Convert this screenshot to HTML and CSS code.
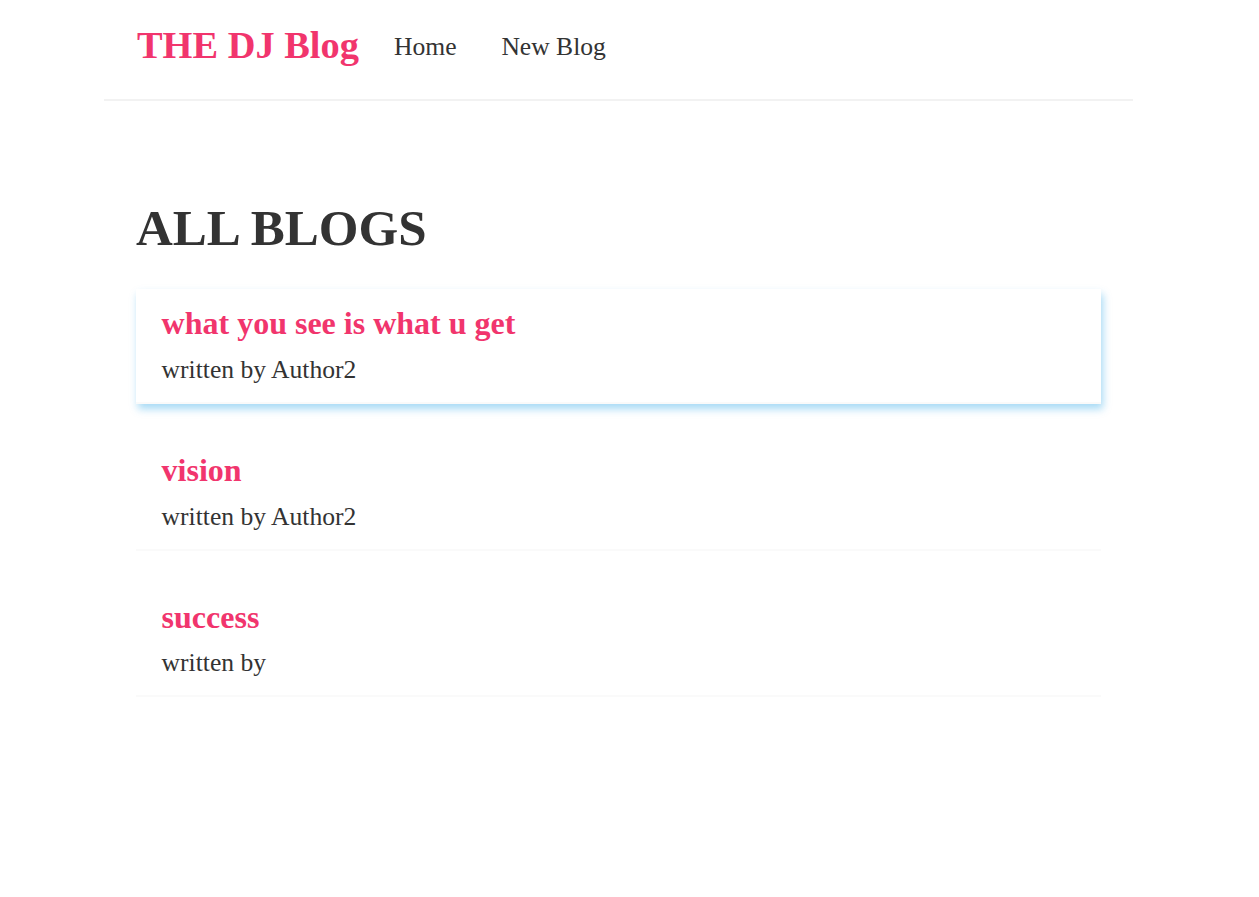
FILE: index.html
```html
<!DOCTYPE html>
<html lang="en">
<head>
<meta charset="utf-8">
<title>THE DJ Blog</title>
<link rel="stylesheet" href="styles.css">
</head>
<body>
<div class="app">
  <nav class="navbar">
    <h1 class="brand">THE DJ Blog</h1>
    <div class="links">
      <a href="#" class="link">Home</a>
      <a href="#" class="link">New Blog</a>
    </div>
  </nav>
  <main class="content">
    <h2 class="page-title">ALL BLOGS</h2>
    <div class="blog-preview hovered">
      <h2 class="blog-title">what you see is what u get</h2>
      <p class="blog-author">written by Author2</p>
    </div>
    <div class="blog-preview">
      <h2 class="blog-title">vision</h2>
      <p class="blog-author">written by Author2</p>
    </div>
    <div class="blog-preview">
      <h2 class="blog-title">success</h2>
      <p class="blog-author">written by </p>
    </div>
  </main>
</div>
</body>
</html>
```
FILE: styles.css
```css
* {
  margin: 0;
  box-sizing: border-box;
}
body {
  font-family: "Liberation Serif", "Times New Roman", serif;
  color: #333;
  background: #fff;
}
.app {
  padding-right: 22px;
}
.navbar {
  display: flex;
  align-items: center;
  max-width: 1029px;
  margin: 0 auto;
  padding: 23px 33px 32px;
  border-bottom: 2px solid #f2f2f2;
}
.brand {
  color: #f1356d;
  font-size: 38.4px;
  font-weight: bold;
}
.links {
  display: flex;
  padding-top: 3px;
}
.link {
  margin-left: 25.6px;
  padding: 0 9.6px;
  text-decoration: none;
  color: #333;
  font-size: 25.6px;
}
.content {
  max-width: 1029px;
  margin: 64px auto;
  padding: 34px 32px 32px 32px;
}
.page-title {
  font-size: 51px;
  font-weight: bold;
  line-height: 59px;
  margin-bottom: -1px;
}
.blog-preview {
  margin: 32px 0;
  padding: 16px 25.6px 17px;
  border-bottom: 2px solid #fafafa;
}
.blog-preview.hovered {
  box-shadow: 2px 5px 8px rgba(0, 150, 225, 0.35);
}
.blog-title {
  font-size: 32px;
  color: #f1356d;
  margin-bottom: 12.8px;
}
.blog-author {
  font-size: 25.6px;
}
```
